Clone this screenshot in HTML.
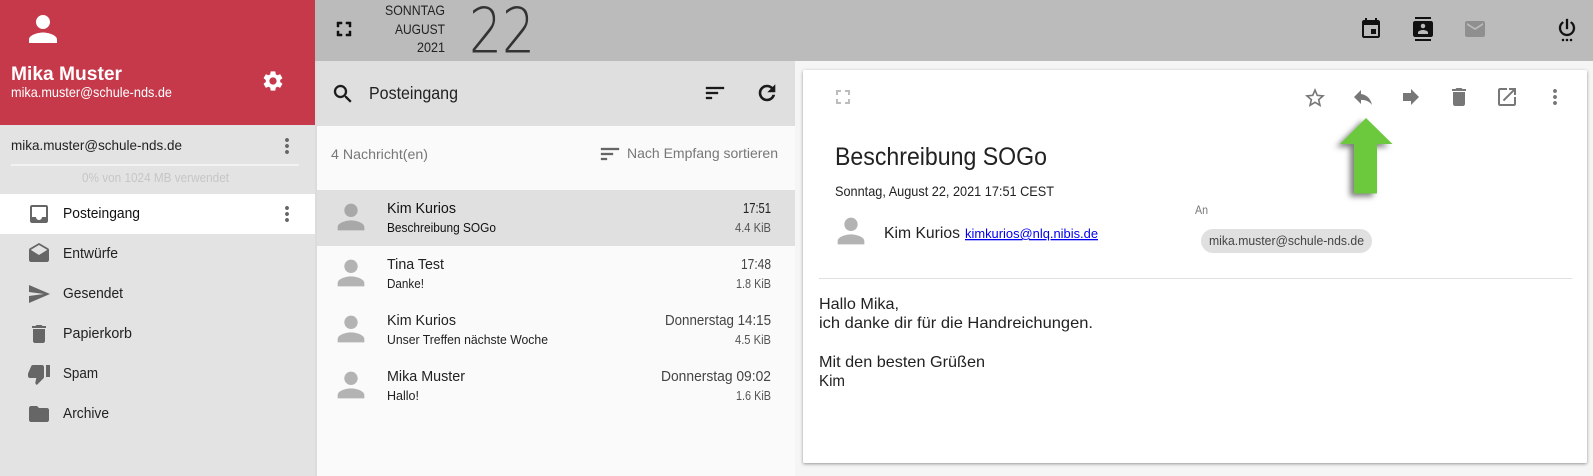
<!DOCTYPE html>
<html lang="de">
<head>
<meta charset="utf-8">
<title>Posteingang</title>
<style>
html,body{margin:0;padding:0;width:1593px;height:476px;overflow:hidden;background:#f5f5f5}
svg{display:block}
text{font-family:"Liberation Sans",sans-serif}
</style>
</head>
<body>
<svg width="1593" height="476" viewBox="0 0 1593 476" xmlns="http://www.w3.org/2000/svg">
<defs>
<filter id="card" x="-3%" y="-5%" width="106%" height="110%"><feDropShadow dx="0" dy="1" stdDeviation="1.6" flood-color="#000" flood-opacity=".4"/></filter>
<filter id="arrow" x="-50%" y="-20%" width="200%" height="140%"><feDropShadow dx="-4" dy="3" stdDeviation="3" flood-color="#000" flood-opacity=".5"/></filter>
<path id="p" d="M12 12c2.21 0 4-1.79 4-4s-1.79-4-4-4-4 1.79-4 4 1.79 4 4 4zm0 2c-2.67 0-8 1.34-8 4v2h16v-2c0-2.66-5.33-4-8-4z"/>
<path id="more" d="M12 8c1.1 0 2-.9 2-2s-.9-2-2-2-2 .9-2 2 .9 2 2 2zm0 2c-1.1 0-2 .9-2 2s.9 2 2 2 2-.9 2-2-.9-2-2-2zm0 6c-1.1 0-2 .9-2 2s.9 2 2 2 2-.9 2-2-.9-2-2-2z"/>
<path id="trash" d="M6 19c0 1.1.9 2 2 2h8c1.1 0 2-.9 2-2V7H6v12zM19 4h-3.5l-1-1h-5l-1 1H5v2h14V4z"/>
<path id="sort" d="M3 18h6v-2H3v2zM3 6v2h18V6H3zm0 7h12v-2H3v2z"/>
<path id="full" d="M7 14H5v5h5v-2H7v-3zm-2-4h2V7h3V5H5v5zm12 7h-3v2h5v-5h-2v3zM14 5v2h3v3h2V5h-5z"/>
</defs>

<!-- backgrounds -->
<rect width="1593" height="476" fill="#f5f5f5"/>
<rect width="315" height="476" fill="#e3e3e3"/>
<rect width="315" height="125" fill="#c5394b"/>
<rect y="194" width="315" height="40" fill="#fff"/>
<rect x="315" width="1278" height="61" fill="#bbbbbb"/>
<rect x="315" y="61" width="480" height="65" fill="#dfdfdf"/>
<rect x="315" y="126" width="480" height="350" fill="#fafafa"/>
<rect x="315" y="190" width="480" height="56" fill="#e0e0e0"/>
<rect x="315" y="61" width="2" height="415" fill="#dcdcdc"/>

<!-- sidebar header -->
<use href="#p" transform="translate(22 8) scale(1.75)" fill="#fff"/>
<text x="11" y="80" font-size="19" font-weight="700" fill="#fff" textLength="111" lengthAdjust="spacingAndGlyphs">Mika Muster</text>
<text x="11" y="97" font-size="14" fill="#fff" textLength="161" lengthAdjust="spacingAndGlyphs">mika.muster@schule-nds.de</text>
<path transform="translate(261 69)" fill="#fff" d="M19.14 12.94c.04-.3.06-.61.06-.94 0-.32-.02-.64-.07-.94l2.03-1.58c.18-.14.23-.41.12-.61l-1.92-3.32c-.12-.22-.37-.29-.59-.22l-2.39.96c-.5-.38-1.03-.7-1.62-.94l-.36-2.54c-.04-.24-.24-.41-.48-.41h-3.84c-.24 0-.43.17-.47.41l-.36 2.54c-.59.24-1.13.57-1.62.94l-2.39-.96c-.22-.08-.47 0-.59.22L2.74 8.87c-.12.21-.08.47.12.61l2.03 1.58c-.05.3-.09.63-.09.94s.02.64.07.94l-2.03 1.58c-.18.14-.23.41-.12.61l1.92 3.32c.12.22.37.29.59.22l2.39-.96c.5.38 1.03.7 1.62.94l.36 2.54c.05.24.24.41.48.41h3.84c.24 0 .44-.17.47-.41l.36-2.54c.59-.24 1.13-.56 1.62-.94l2.39.96c.22.08.47 0 .59-.22l1.92-3.32c.12-.22.07-.47-.12-.61l-2.01-1.58zM12 15.6c-1.98 0-3.6-1.62-3.6-3.6s1.62-3.6 3.6-3.6 3.6 1.62 3.6 3.6-1.62 3.6-3.6 3.6z"/>

<!-- account -->
<text x="11" y="150" font-size="14" fill="#222" textLength="171" lengthAdjust="spacingAndGlyphs">mika.muster@schule-nds.de</text>
<use href="#more" transform="translate(275 134)" fill="#666"/>
<rect x="11" y="164" width="288" height="2" fill="#f2f2f2"/>
<text x="82" y="182" font-size="12.5" fill="#c6c6c6" textLength="147" lengthAdjust="spacingAndGlyphs">0% von 1024 MB verwendet</text>

<!-- folders -->
<path transform="translate(27 202)" fill="#666" d="M19 3H4.99c-1.11 0-1.98.89-1.98 2L3 19c0 1.1.88 2 1.99 2H19c1.1 0 2-.9 2-2V5c0-1.11-.9-2-2-2zm0 12h-4c0 1.66-1.35 3-3 3s-3-1.34-3-3H4.99V5H19v10z"/>
<text x="63" y="218" font-size="14.5" fill="#111" textLength="77" lengthAdjust="spacingAndGlyphs">Posteingang</text>
<use href="#more" transform="translate(275 202)" fill="#666"/>
<path transform="translate(27 242)" fill="#666" d="M21.99 8c0-.72-.37-1.35-.94-1.7L12 1 2.95 6.3C2.38 6.65 2 7.28 2 8v10c0 1.1.9 2 2 2h16c1.1 0 2-.9 2-2l-.01-10zM12 13L3.74 7.84 12 3l8.26 4.84L12 13z"/>
<text x="63" y="258" font-size="14.5" fill="#222" textLength="55" lengthAdjust="spacingAndGlyphs">Entwürfe</text>
<path transform="translate(27 282)" fill="#666" d="M2.01 21L23 12 2.01 3 2 10l15 2-15 2z"/>
<text x="63" y="298" font-size="14.5" fill="#222" textLength="60" lengthAdjust="spacingAndGlyphs">Gesendet</text>
<use href="#trash" transform="translate(27 322)" fill="#666"/>
<text x="63" y="338" font-size="14.5" fill="#222" textLength="69" lengthAdjust="spacingAndGlyphs">Papierkorb</text>
<path transform="translate(27 362)" fill="#666" d="M15 3H6c-.83 0-1.54.5-1.84 1.22l-3.02 7.05c-.09.23-.14.47-.14.73v2c0 1.1.9 2 2 2h6.31l-.95 4.57-.03.32c0 .41.17.79.44 1.06L9.83 23l6.59-6.59c.36-.36.58-.86.58-1.41V5c0-1.1-.9-2-2-2zm4 0v12h4V3h-4z"/>
<text x="63" y="378" font-size="14.5" fill="#222" textLength="35" lengthAdjust="spacingAndGlyphs">Spam</text>
<path transform="translate(27 402)" fill="#666" d="M10 4H4c-1.1 0-1.99.9-1.99 2L2 18c0 1.1.9 2 2 2h16c1.1 0 2-.9 2-2V8c0-1.1-.9-2-2-2h-8l-2-2z"/>
<text x="63" y="418" font-size="14.5" fill="#222" textLength="46" lengthAdjust="spacingAndGlyphs">Archive</text>

<!-- top bar -->
<use href="#full" transform="translate(332 17)" fill="#111" stroke="#111" stroke-width=".5"/>
<text x="385" y="15" font-size="14" fill="#222" textLength="60" lengthAdjust="spacingAndGlyphs">SONNTAG</text>
<text x="395" y="34" font-size="14" fill="#222" textLength="50" lengthAdjust="spacingAndGlyphs">AUGUST</text>
<text x="417" y="52" font-size="14" fill="#222" textLength="28" lengthAdjust="spacingAndGlyphs">2021</text>
<text x="469" y="52.500" font-size="62" fill="#333" textLength="66" lengthAdjust="spacingAndGlyphs" style="font-family:'DejaVu Sans','Liberation Sans',sans-serif;font-weight:200">22</text>
<path transform="translate(1359 17)" fill="#111" d="M17 12h-5v5h5v-5zM16 1v2H8V1H6v2H5c-1.11 0-1.99.9-1.99 2L3 19c0 1.1.89 2 2 2h14c1.1 0 2-.9 2-2V5c0-1.1-.9-2-2-2h-1V1h-2zm3 18H5V8h14v11z"/>
<path transform="translate(1411 17)" fill="#111" d="M20 0H4v2h16V0zM4 24h16v-2H4v2zM20 4H4c-1.1 0-2 .9-2 2v12c0 1.1.9 2 2 2h16c1.1 0 2-.9 2-2V6c0-1.1-.9-2-2-2zm-8 2.750c1.240 0 2.250 1.010 2.250 2.250s-1.010 2.250-2.250 2.250S9.750 10.240 9.750 9 10.760 6.750 12 6.750zM17 17H7v-1.500c0-1.670 3.330-2.500 5-2.500s5 .830 5 2.500V17z"/>
<path transform="translate(1463 17)" fill="#8f8f8f" d="M20 4H4c-1.100 0-1.990.900-1.990 2L2 18c0 1.100.900 2 2 2h16c1.100 0 2-.900 2-2V6c0-1.100-.900-2-2-2zm0 4l-8 5-8-5V6l8 5 8-5v2z"/>
<path transform="translate(1555 17)" fill="#111" stroke="#111" stroke-width=".3" d="M7 24h2v-2H7v2zm4 0h2v-2h-2v2zm2-22h-2v10h2V2zm3.560 2.440l-1.450 1.450C16.840 6.940 18 8.830 18 11c0 3.310-2.690 6-6 6s-6-2.690-6-6c0-2.170 1.160-4.060 2.880-5.120L7.440 4.440C5.360 5.880 4 8.280 4 11c0 4.420 3.580 8 8 8s8-3.580 8-8c0-2.720-1.360-5.120-3.440-6.560zM15 24h2v-2h-2v2z"/>

<!-- list header -->
<path transform="translate(331 82)" fill="#1a1a1a" stroke="#1a1a1a" stroke-width=".3" d="M15.500 14h-.790l-.280-.270C15.410 12.590 16 11.110 16 9.500 16 5.910 13.090 3 9.500 3S3 5.910 3 9.500 5.910 16 9.500 16c1.610 0 3.090-.590 4.230-1.570l.270.280v.790l5 4.990L20.490 19l-4.990-5zm-6 0C7.010 14 5 11.990 5 9.500S7.010 5 9.500 5 14 7.010 14 9.500 11.990 14 9.500 14z"/>
<text x="369" y="99" font-size="17.500" fill="#222" textLength="89" lengthAdjust="spacingAndGlyphs">Posteingang</text>
<use href="#sort" transform="translate(703 81)" fill="#1a1a1a" stroke="#1a1a1a" stroke-width=".3"/>
<path transform="translate(755 81)" fill="#1a1a1a" stroke="#1a1a1a" stroke-width=".6" d="M17.650 6.350C16.200 4.900 14.210 4 12 4c-4.420 0-7.990 3.580-7.990 8s3.570 8 7.990 8c3.730 0 6.840-2.550 7.730-6h-2.080c-.820 2.330-3.040 4-5.650 4-3.310 0-6-2.690-6-6s2.690-6 6-6c1.660 0 3.140.690 4.220 1.780L13 11h7V4l-2.350 2.350z"/>
<text x="331" y="159" font-size="14" fill="#777" textLength="97" lengthAdjust="spacingAndGlyphs">4 Nachricht(en)</text>
<use href="#sort" transform="translate(598 142)" fill="#666" stroke="#666" stroke-width=".3"/>
<text x="627" y="158" font-size="14" fill="#777" textLength="151" lengthAdjust="spacingAndGlyphs">Nach Empfang sortieren</text>

<!-- messages -->
<g fill="#b3b3b3">
<use href="#p" transform="translate(331 197) scale(1.667)" fill="#a8a8a8"/>
<use href="#p" transform="translate(331 253) scale(1.667)"/>
<use href="#p" transform="translate(331 309) scale(1.667)"/>
<use href="#p" transform="translate(331 365) scale(1.667)"/>
</g>
<g font-size="15" fill="#222">
<text x="387" y="213" fill="#111" textLength="69" lengthAdjust="spacingAndGlyphs">Kim Kurios</text>
<text x="387" y="269" textLength="57" lengthAdjust="spacingAndGlyphs">Tina Test</text>
<text x="387" y="325" textLength="69" lengthAdjust="spacingAndGlyphs">Kim Kurios</text>
<text x="387" y="381" textLength="78" lengthAdjust="spacingAndGlyphs">Mika Muster</text>
</g>
<g font-size="13" fill="#222">
<text x="387" y="232" fill="#111" textLength="109" lengthAdjust="spacingAndGlyphs">Beschreibung SOGo</text>
<text x="387" y="288" textLength="37" lengthAdjust="spacingAndGlyphs">Danke!</text>
<text x="387" y="344" textLength="161" lengthAdjust="spacingAndGlyphs">Unser Treffen nächste Woche</text>
<text x="387" y="400" textLength="32" lengthAdjust="spacingAndGlyphs">Hallo!</text>
</g>
<g font-size="15" fill="#444">
<text x="743" y="213" fill="#222" textLength="28" lengthAdjust="spacingAndGlyphs">17:51</text>
<text x="741" y="269" textLength="30" lengthAdjust="spacingAndGlyphs">17:48</text>
<text x="665" y="325" textLength="106" lengthAdjust="spacingAndGlyphs">Donnerstag 14:15</text>
<text x="661" y="381" textLength="110" lengthAdjust="spacingAndGlyphs">Donnerstag 09:02</text>
</g>
<g font-size="13" fill="#555">
<text x="735" y="232" textLength="36" lengthAdjust="spacingAndGlyphs">4.4 KiB</text>
<text x="736" y="288" textLength="35" lengthAdjust="spacingAndGlyphs">1.8 KiB</text>
<text x="735" y="344" textLength="36" lengthAdjust="spacingAndGlyphs">4.5 KiB</text>
<text x="736" y="400" textLength="35" lengthAdjust="spacingAndGlyphs">1.6 KiB</text>
</g>

<!-- card -->
<rect x="803" y="70" width="784" height="393" rx="2" fill="#fff" filter="url(#card)"/>
<use href="#full" transform="translate(831 85)" fill="#bdbdbd"/>
<path transform="translate(1303 86)" fill="#777" d="M22 9.240l-7.190-.620L12 2 9.190 8.630 2 9.240l5.460 4.730L5.820 21 12 17.270 18.180 21l-1.630-7.030L22 9.240zM12 15.400l-3.760 2.270 1-4.280-3.320-2.880 4.380-.380L12 6.100l1.710 4.040 4.380.380-3.320 2.880 1 4.280L12 15.400z"/>
<path transform="translate(1351 85)" fill="#777" d="M10 9V5l-7 7 7 7v-4.100c5 0 8.500 1.600 11 5.100-1-5-4-10-11-11z"/>
<path transform="translate(1399 85)" fill="#777" d="M12 8V4l8 8-8 8v-4H4V8z"/>
<use href="#trash" transform="translate(1447 85)" fill="#777"/>
<path transform="translate(1495 85)" fill="#777" d="M19 19H5V5h7V3H5c-1.110 0-2 .900-2 2v14c0 1.100.890 2 2 2h14c1.100 0 2-.900 2-2v-7h-2v7zM14 3v2h3.590l-9.830 9.830 1.410 1.410L19 6.410V10h2V3h-7z"/>
<use href="#more" transform="translate(1543 85)" fill="#777"/>

<text x="835" y="165" font-size="25" fill="#222" textLength="212" lengthAdjust="spacingAndGlyphs">Beschreibung SOGo</text>
<text x="835" y="196" font-size="14" fill="#222" textLength="219" lengthAdjust="spacingAndGlyphs">Sonntag, August 22, 2021 17:51 CEST</text>
<use href="#p" transform="translate(831 211) scale(1.667)" fill="#b3b3b3"/>
<text x="884" y="238" font-size="16" fill="#222" textLength="76" lengthAdjust="spacingAndGlyphs">Kim Kurios</text>
<text x="965" y="238" font-size="13" fill="#0000ee" text-decoration="underline" textLength="133" lengthAdjust="spacingAndGlyphs">kimkurios@nlq.nibis.de</text>
<text x="1195" y="214" font-size="12" fill="#777" textLength="13" lengthAdjust="spacingAndGlyphs">An</text>
<rect x="1201" y="229" width="171" height="24" rx="12" fill="#e0e0e0"/>
<text x="1209" y="245" font-size="13" fill="#444" textLength="155" lengthAdjust="spacingAndGlyphs">mika.muster@schule-nds.de</text>
<rect x="819" y="278" width="753" height="1" fill="#e0e0e0"/>
<g font-size="16" fill="#222">
<text x="819" y="309" textLength="80" lengthAdjust="spacingAndGlyphs">Hallo Mika,</text>
<text x="819" y="328" textLength="274" lengthAdjust="spacingAndGlyphs">ich danke dir für die Handreichungen.</text>
<text x="819" y="367" textLength="166" lengthAdjust="spacingAndGlyphs">Mit den besten Grüßen</text>
<text x="819" y="386" textLength="26" lengthAdjust="spacingAndGlyphs">Kim</text>
</g>

<!-- green arrow -->
<path d="M1366 118L1392.500 144H1377V193.500H1354V144H1340Z" fill="#6cc83c" filter="url(#arrow)"/>
</svg>
</body>
</html>
